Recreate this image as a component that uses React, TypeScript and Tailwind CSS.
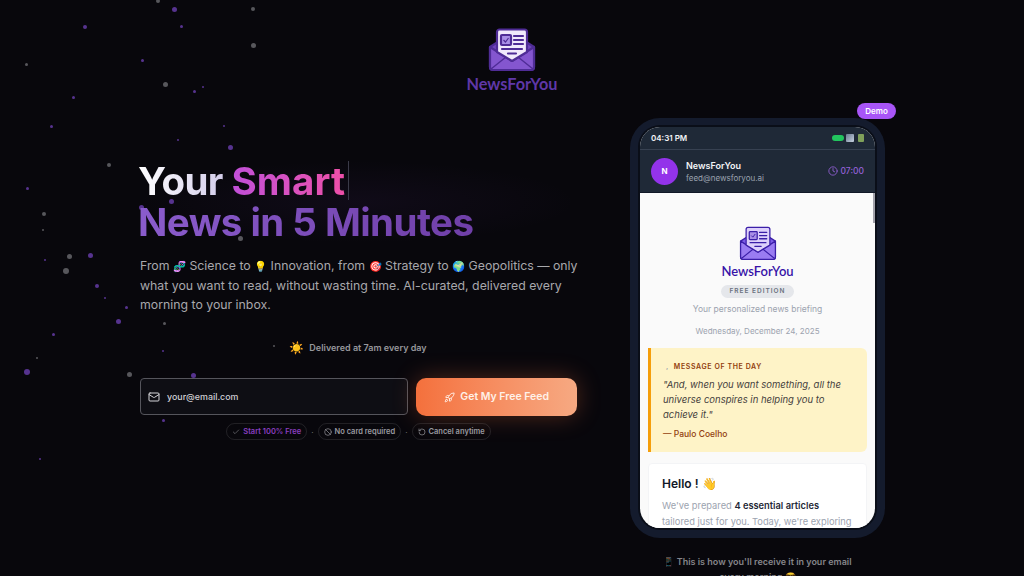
import React from 'react';
import { Mail, Rocket, Check, Ban, RotateCcw, Clock } from 'lucide-react';

const particles: [number, number, number, string][] = [
    [158, 1, 4, 'g'], [174, 9, 5, 'p'], [253, 9, 4, 'g'], [85, 27, 4, 'p'], [181, 26, 3, 'p'], [253, 45, 5, 'g'],
    [26, 64, 3, 'g'], [142, 60, 3, 'p'], [165, 84, 5, 'g'], [194, 91, 3, 'p'], [203, 87, 2, 'p'], [73, 97, 3, 'p'],
    [51, 126, 3, 'p'], [224, 126, 2, 'p'], [178, 140, 2, 'p'], [230, 147, 5, 'p'], [109, 165, 4, 'g'], [27, 188, 3, 'p'],
    [44, 214, 4, 'g'], [43, 230, 2, 'g'], [45, 260, 2, 'p'], [69, 256, 5, 'g'], [90, 255, 5, 'p'], [66, 271, 6, 'g'],
    [97, 286, 4, 'p'], [105, 298, 2, 'p'], [126, 307, 3, 'p'], [118, 321, 5, 'p'], [164, 323, 3, 'g'], [53, 334, 3, 'p'],
    [163, 351, 2, 'p'], [37, 358, 2, 'g'], [27, 372, 6, 'p'], [129, 374, 5, 'g'], [193, 375, 5, 'p'], [141, 207, 5, 'p'],
    [171, 201, 5, 'p'], [240, 238, 5, 'g'], [163, 420, 3, 'p'], [40, 459, 2, 'p'], [274, 346, 2, 'g'],
];

const LogoIcon: React.FC<{ className?: string; light?: boolean }> = ({ className, light }) => {
    const stroke = light ? '#3b1fa8' : '#4f2c96';
    const back = light ? '#7c5ce6' : '#6f45ba';
    const front = light ? '#9a7cf2' : '#8456cf';
    const paper = light ? '#ddd0fb' : '#f1e9fc';
    const w = light ? 1.6 : 2.2;
    return (
        <svg viewBox="0 0 48 44" className={className}>
            <path d="M2 19 L24 5 L46 19 V39 a3 3 0 0 1 -3 3 H5 a3 3 0 0 1 -3 -3 Z" fill={back} stroke={stroke} strokeWidth={w} strokeLinejoin="round" />
            <path d="M2 19 L24 33 L46 19 V39 a3 3 0 0 1 -3 3 H5 a3 3 0 0 1 -3 -3 Z" fill={front} stroke={stroke} strokeWidth={w} strokeLinejoin="round" />
            <path d="M9 24 V4 a2.5 2.5 0 0 1 2.5 -2.5 H36.5 a2.5 2.5 0 0 1 2.5 2.5 V24 L24 33 Z" fill={paper} stroke={stroke} strokeWidth={w} strokeLinejoin="round" />
            <rect x="13" y="7" width="10" height="10" rx="1" fill="#a98fe6" stroke={stroke} strokeWidth={w} />
            <path d="M15.5 12 l2 2 l3 -4" fill="none" stroke={stroke} strokeWidth="1.2" />
            <path d="M26 8 H35 M26 12 H35 M26 16 H35 M14 21 H34 M20 25.5 H28" stroke={stroke} strokeWidth={w} strokeLinecap="round" />
            <path d="M3 41 L18 29 M45 41 L30 29" stroke={stroke} strokeWidth="1.4" />
        </svg>
    );
};

const Pill: React.FC<{ icon: React.ReactNode; text: string; purple?: boolean }> = ({ icon, text, purple }) => (
    <span className={`flex h-[17px] items-center gap-[3px] rounded-full border border-white/10 px-[5px] text-[7.5px] font-semibold ${purple ? 'text-[#8b3fc0]' : 'text-[#9a9aa0]'}`}>
        {icon}
        {text}
    </span>
);

const Emoji: React.FC<{ children: string }> = ({ children }) => <span className="text-[10.5px]">{children}</span>;

export default function App() {
    return (
        <div className="relative flex h-[576px] w-[1024px] flex-col overflow-hidden bg-[#08070c] font-['Inter',sans-serif]">
            {particles.map(([x, y, s, c], i) => (
                <span
                    key={i}
                    className={`absolute rounded-full blur-[0.4px] ${c === 'p' ? 'bg-[#6a3fb0]/80' : 'bg-[#6b6b70]/80'}`}
                    style={{ left: x - s / 2, top: y - s / 2, width: s, height: s }}
                />
            ))}

            <header className="relative flex flex-col items-center pt-[28px]">
                <LogoIcon className="h-[44px] w-[48px]" />
                <div className="mt-[2px] text-[16.3px] leading-[20px] font-bold text-[#5f37a8] font-['Lato',sans-serif]">NewsForYou</div>
            </header>

            <main className="relative flex flex-1">
                <section className="ml-[140px] mt-[67px] w-[437px]">
                    <h1 className="-ml-[2px] bg-[radial-gradient(closest-side,rgba(120,60,180,0.07),transparent)] text-[38.5px] leading-[41px] font-bold tracking-[-0.55px] whitespace-nowrap">
                        <span className="bg-gradient-to-r from-white to-[#cfc8e8] bg-clip-text text-transparent">Your </span>
                        <span className="bg-gradient-to-r from-[#c14fd8] to-[#ee4fa8] bg-clip-text tracking-[0.1px] text-transparent">Smart</span>
                        <span className="ml-[3px] inline-block h-[39px] w-px bg-[#3a3a48] align-top" />
                        <br />
                        <span className="bg-gradient-to-r from-[#8a5ccc] to-[#6f3fa8] bg-clip-text text-transparent">News in 5 Minutes</span>
                    </h1>
                    <p className="mt-[13px] w-[441px] text-[12.3px] leading-[19px] text-[#a8a8ad]">
                        From <Emoji>🧬</Emoji> Science to <Emoji>💡</Emoji> Innovation, from <Emoji>🎯</Emoji> Strategy to <Emoji>🌍</Emoji> Geopolitics — only what you want to read, without wasting time. AI-curated, delivered every morning to your inbox.
                    </p>
                    <div className="mt-[25px] flex items-center justify-center gap-[5px] pr-[1px] text-[9px] font-semibold text-[#97979c]">
                        <span className="text-[12px]">☀️</span>
                        <span>Delivered at 7am every day</span>
                    </div>
                    <form className="mt-[21px] flex gap-[8px]">
                        <div className="flex h-[37px] w-[269px] items-center gap-[7px] rounded-[4px] border border-[#55555c] bg-[#0e0e14] px-[7px]">
                            <Mail className="h-[12px] w-[12px] text-[#d4d4d8]" />
                            <span className="text-[8.9px] font-medium text-[#d0d0d4]">your@email.com</span>
                        </div>
                        <button type="button" className="flex h-[38px] w-[161px] items-center justify-center gap-[5px] rounded-[10px] bg-gradient-to-r from-[#f4703c] to-[#f6a982] text-[10.5px] font-semibold text-[#fff1e8] shadow-[0_0_24px_rgba(244,112,60,0.3)]">
                            <Rocket className="h-[11px] w-[11px]" />
                            Get My Free Feed
                        </button>
                    </form>
                    <div className="mt-[7px] flex items-center justify-center gap-[4px] text-[#77777c]">
                        <Pill purple icon={<Check className="h-[8px] w-[8px] text-[#7a7a80]" />} text="Start 100% Free" />
                        <span className="text-[8px]">·</span>
                        <Pill icon={<Ban className="h-[8px] w-[8px]" />} text="No card required" />
                        <span className="text-[8px]">·</span>
                        <Pill icon={<RotateCcw className="h-[8px] w-[8px]" />} text="Cancel anytime" />
                    </div>
                </section>

                <section className="ml-[53px] flex w-[255px] flex-col items-center pt-[24px]">
                    <div className="relative h-[420px] w-[255px] flex-none rounded-[30px] bg-[#141b2d] p-[10px] pt-[9px]">
                        <span className="absolute -top-[15px] -right-[11px] flex h-[16px] w-[39px] items-center justify-center rounded-full bg-[#a855f7] text-[8px] font-semibold text-white">Demo</span>
                        <div className="flex h-full flex-col overflow-hidden rounded-[20px] bg-[#fafafa] ring-2 ring-[#0a0e18]">
                            <div className="flex h-[23px] flex-none items-center justify-between border-b border-[#374151] bg-[#1f2937] px-[11px] text-[8px] font-semibold text-[#f3f4f6]">
                                <span>04:31 PM</span>
                                <span className="flex items-center gap-[2px]">
                                    <span className="h-[6px] w-[12px] rounded-full bg-[#22c55e]" />
                                    <span className="h-[8px] w-[8px] rounded-[1px] bg-gradient-to-br from-[#6b7a90] to-[#c7d2e0]" />
                                    <span className="ml-[2px] h-[8px] w-[6px] rounded-[1px] bg-[#7fa05a]" />
                                </span>
                            </div>
                            <div className="flex h-[43px] flex-none items-center border-b border-[#111827] bg-[#1f2937] pl-[11px] pr-[11px]">
                                <span className="flex h-[27px] w-[27px] items-center justify-center rounded-full bg-[#9333ea] text-[8px] font-bold text-white">N</span>
                                <div className="ml-[8px] flex-1">
                                    <div className="text-[9px] leading-[13px] font-semibold text-[#f3f4f6]">NewsForYou</div>
                                    <div className="text-[8px] leading-[12px] text-[#9ca3af]">feed@newsforyou.ai</div>
                                </div>
                                <span className="flex items-center gap-[3px] text-[8.5px] font-medium text-[#9561d8]">
                                    <Clock className="h-[10px] w-[10px]" />
                                    07:00
                                </span>
                            </div>
                            <div className="relative flex-1 overflow-hidden px-[8px]">
                                <span className="absolute right-0 top-0 h-[30px] w-[2px] bg-[#a1a1aa]" />
                                <div className="flex flex-col items-center pt-[33px]">
                                    <LogoIcon light className="h-[35px] w-[38px]" />
                                    <div className="mt-[2px] text-[13px] leading-[16px] font-semibold text-[#3713a8] font-['Lato',sans-serif]">NewsForYou</div>
                                    <span className="mt-[6px] flex h-[13px] w-[73px] items-center justify-center rounded-full bg-[#e5e7eb] text-[6.5px] font-semibold tracking-[1px] text-[#6b7280]">FREE EDITION</span>
                                    <div className="mt-[4px] text-[8.5px] leading-[14px] text-[#9ca3af]">Your personalized news briefing</div>
                                    <div className="mt-[9px] text-[8px] leading-[12px] text-[#9ca3af]">Wednesday, December 24, 2025</div>
                                </div>
                                <div className="mt-[11px] h-[104px] rounded-r-[6px] border-l-[3px] border-[#f59e0b] bg-[#fef3c7] pl-[12px] pr-[20px] pt-[13px]">
                                    <div className="text-[7px] leading-[11px] font-semibold tracking-[0.6px] text-[#92400e]"><span className="ml-[3px] mr-[5px] text-[#9ca3af]">,</span>MESSAGE OF THE DAY</div>
                                    <p className="mt-[5px] text-[9.5px] leading-[15px] italic text-[#44403c]">"And, when you want something, all the universe conspires in helping you to achieve it."</p>
                                    <div className="mt-[6px] text-[8.5px] leading-[12px] font-medium text-[#92400e]">— Paulo Coelho</div>
                                </div>
                                <div className="mt-[11px] h-[80px] rounded-[4px] border border-[#f3f4f6] bg-white pl-[13px] pr-[8px] pt-[11px]">
                                    <div className="text-[12px] leading-[18px] font-semibold text-[#111827]">Hello ! 👋</div>
                                    <p className="mt-[5px] text-[9.3px] leading-[16px] text-[#9ca3af]">
                                        We've prepared <strong className="font-semibold text-[#1f2937]">4 essential articles</strong><br />tailored just for you. Today, we're exploring
                                    </p>
                                </div>
                            </div>
                        </div>
                    </div>
                    <p className="mt-[16px] w-[200px] flex-none text-center text-[9px] leading-[15px] font-semibold text-[#85858a]">📱 This is how you'll receive it in your email every morning 😎</p>
                </section>
            </main>
        </div>
    );
}
